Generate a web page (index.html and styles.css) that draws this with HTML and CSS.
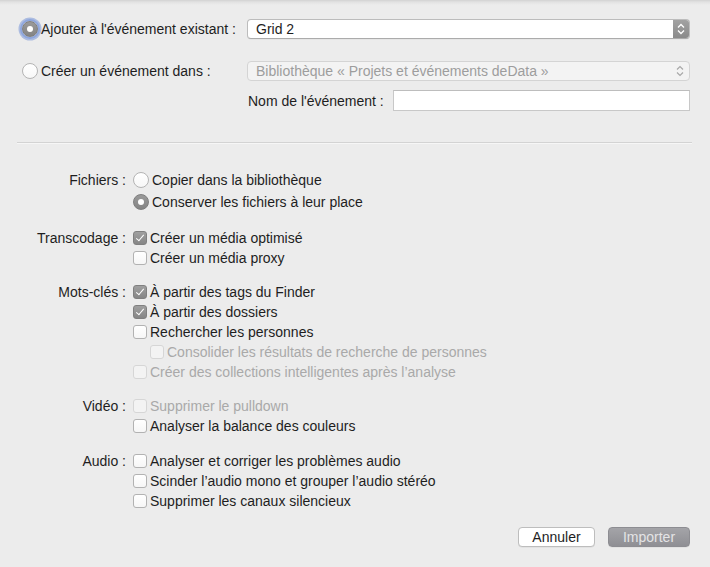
FILE: index.html
```html
<!DOCTYPE html>
<html lang="fr">
<head>
<meta charset="utf-8">
<link rel="stylesheet" href="styles.css">
</head>
<body>
<div class="sheet">
  <section class="target">
    <div class="trow">
      <label class="opt"><span class="radio on focus"></span>Ajouter à l'événement existant :</label>
      <div class="popup"><span class="ptext">Grid 2</span><span class="parrow"><svg width="8" height="12" viewBox="0 0 8 12"><path d="M1 4.5 L4 1.5 L7 4.5 M1 7.5 L4 10.5 L7 7.5" fill="none" stroke="#fff" stroke-width="1.3"/></svg></span></div>
    </div>
    <div class="trow r2">
      <label class="opt"><span class="radio"></span>Créer un événement dans :</label>
      <div class="popup disabled"><span class="ptext">Bibliothèque « Projets et événements deData »</span><span class="parrow"><svg width="8" height="12" viewBox="0 0 8 12"><path d="M1 4.5 L4 1.5 L7 4.5 M1 7.5 L4 10.5 L7 7.5" fill="none" stroke="#a8a8a8" stroke-width="1.2"/></svg></span></div>
    </div>
    <div class="trow r3">
      <span></span>
      <div class="namefield"><span>Nom de l'événement :</span><span class="field"></span></div>
    </div>
  </section>

  <hr class="divider">

  <section class="options">
    <div class="group radios">
      <div class="glabel">Fichiers :</div>
      <div class="items">
        <div class="item"><span class="radio"></span>Copier dans la bibliothèque</div>
        <div class="item"><span class="radio on"></span>Conserver les fichiers à leur place</div>
      </div>
    </div>
    <div class="group g-trans">
      <div class="glabel">Transcodage :</div>
      <div class="items">
        <div class="item"><span class="cb checked"></span>Créer un média optimisé</div>
        <div class="item"><span class="cb"></span>Créer un média proxy</div>
      </div>
    </div>
    <div class="group">
      <div class="glabel">Mots-clés :</div>
      <div class="items">
        <div class="item"><span class="cb checked"></span>À partir des tags du Finder</div>
        <div class="item"><span class="cb checked"></span>À partir des dossiers</div>
        <div class="item"><span class="cb"></span>Rechercher les personnes</div>
        <div class="item sub dis"><span class="cb"></span>Consolider les résultats de recherche de personnes</div>
        <div class="item dis"><span class="cb"></span>Créer des collections intelligentes après l’analyse</div>
      </div>
    </div>
    <div class="group">
      <div class="glabel">Vidéo :</div>
      <div class="items">
        <div class="item dis"><span class="cb"></span>Supprimer le pulldown</div>
        <div class="item"><span class="cb"></span>Analyser la balance des couleurs</div>
      </div>
    </div>
    <div class="group g-audio">
      <div class="glabel">Audio :</div>
      <div class="items">
        <div class="item"><span class="cb"></span>Analyser et corriger les problèmes audio</div>
        <div class="item"><span class="cb"></span>Scinder l’audio mono et grouper l’audio stéréo</div>
        <div class="item"><span class="cb"></span>Supprimer les canaux silencieux</div>
      </div>
    </div>
  </section>

  <footer class="buttons">
    <button class="btn">Annuler</button>
    <button class="btn primary">Importer</button>
  </footer>
</div>
</body>
</html>
```
FILE: styles.css
```css
* { box-sizing: border-box; }
html, body { margin: 0; padding: 0; }
body {
  width: 710px;
  height: 567px;
  overflow: hidden;
  background: linear-gradient(#d2d2d2 0px, #e2e2e2 2px, #ececec 5px, #ececec 100%);
  font-family: "Liberation Sans", Arial, sans-serif;
  font-size: 14px;
  color: #1e1e1e;
}
.sheet { padding-top: 19px; }

.target { padding: 0 20px 0 22px; }
.trow {
  display: grid;
  grid-template-columns: 225px 1fr;
  height: 20px;
  align-items: center;
}
.trow.r2 { margin-top: 22px; }
.trow.r3 { margin-top: 9px; height: 21px; }
.opt { display: flex; align-items: center; white-space: nowrap; }
.opt .radio { margin-right: 3px; }

.radio {
  position: relative;
  display: inline-block;
  width: 16px; height: 16px;
  border-radius: 50%;
  background: linear-gradient(#ffffff, #f7f7f7);
  border: 1px solid #b4b4b4;
  flex: none;
}
.radio.on {
  background: linear-gradient(#9a9a9a, #848484);
  border-color: #7e7e7e;
}
.radio.on::after {
  content: "";
  position: absolute;
  left: 50%; top: 50%;
  width: 6px; height: 6px;
  margin: -3px 0 0 -3px;
  border-radius: 50%;
  background: #fff;
}
.radio.focus {
  box-shadow: 0 0 0 2px #8ea6dc, 0 0 0 3.5px rgba(120,150,215,0.55);
}

.popup {
  display: flex;
  align-items: center;
  height: 20px;
  background: #fff;
  border: 1px solid #bcbcbc;
  border-bottom-color: #ababab;
  border-radius: 4px;
  overflow: hidden;
  box-shadow: 0 0.5px 0.5px rgba(0,0,0,0.06);
}
.ptext { flex: 1; padding-left: 8px; white-space: nowrap; }
.parrow {
  width: 16px; height: 100%;
  display: flex; align-items: center; justify-content: center;
  background: linear-gradient(#a2a2a2, #8a8a8a);
}
.popup.disabled {
  background: #f3f3f3;
  border-color: #d4d4d4;
  color: #9d9d9d;
  box-shadow: none;
}
.popup.disabled .parrow { background: none; width: 18px; }

.namefield { display: flex; align-items: center; gap: 9px; padding-left: 1px; }
.field {
  flex: 1;
  height: 21px;
  background: #fff;
  border: 1px solid #c8c8c8;
  border-top-color: #bdbdbd;
}

.divider {
  margin: 31px 18px 0 17px;
  border: 0;
  height: 1px;
  background: #d3d3d3;
  box-shadow: 0 1px 0 #f6f6f6;
}

.options { margin-top: 26px; }
.group {
  display: grid;
  grid-template-columns: 126px 1fr;
  column-gap: 7px;
  margin-top: 14px;
}
.group.g-trans { margin-top: 15px; }
.group.g-audio { margin-top: 15px; }
.group.radios { margin-top: 0; margin-bottom: 2px; }
.glabel { text-align: right; height: 20px; line-height: 20px; white-space: nowrap; }
.radios .glabel { height: 22px; line-height: 22px; }
.items { display: flex; flex-direction: column; }
.item { display: flex; align-items: center; height: 20px; white-space: nowrap; }
.radios .item { height: 22px; }
.item .radio { margin-right: 3px; }
.item.sub { padding-left: 17px; }
.item.dis { color: #a9a9a9; }

.cb {
  position: relative;
  display: inline-block;
  width: 14px; height: 14px;
  border-radius: 3px;
  background: linear-gradient(#ffffff, #f6f6f6);
  border: 1px solid #b2b2b2;
  margin-right: 3px;
  flex: none;
}
.item.dis .cb { border-color: #d6d6d6; background: #f3f3f3; }
.cb.checked {
  background: linear-gradient(#a0a0a0, #868686);
  border-color: #808080;
}
.cb.checked::after {
  content: "";
  position: absolute;
  left: 4px; top: 1px;
  width: 3px; height: 7px;
  border: solid #fff;
  border-width: 0 1.6px 1.6px 0;
  transform: rotate(40deg);
}

.buttons {
  display: flex;
  justify-content: flex-end;
  gap: 13px;
  padding-right: 20px;
  margin-top: 16px;
}
.btn {
  font-family: inherit;
  font-size: 14px;
  height: 20px;
  padding: 0;
  border-radius: 4px;
  border: 1px solid #bdbdbd;
  background: #fff;
  color: #1e1e1e;
  width: 77px;
  box-shadow: 0 0.5px 0.5px rgba(0,0,0,0.08);
}
.btn.primary {
  width: 82px;
  background: linear-gradient(#a4a4a8, #8f8f94);
  border-color: #8d8d92;
  color: #e4e4e6;
}
```
